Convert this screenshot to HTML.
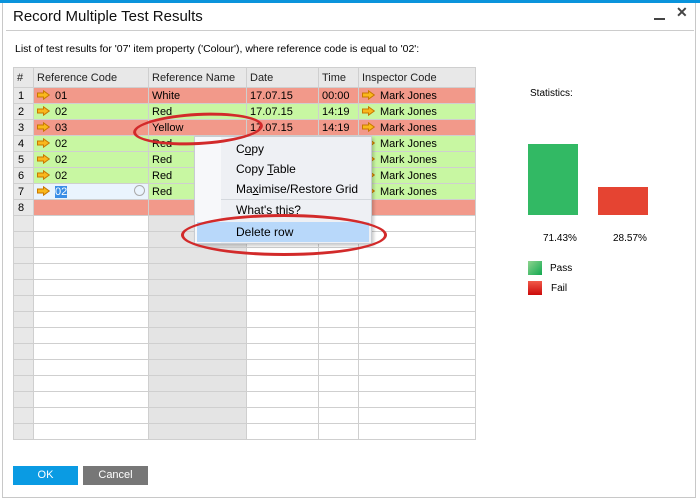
<!DOCTYPE html><html><head><style>
*{margin:0;padding:0;box-sizing:border-box}
body{width:700px;height:500px;background:#fff;font-family:"Liberation Sans",sans-serif;font-size:11px;color:#000;position:relative;overflow:hidden}
.a{position:absolute}
table{border-collapse:collapse;position:absolute;left:13px;top:67px;table-layout:fixed}
td{border:1px solid #cfcfcf;height:16px;padding:0 0 0 3px;white-space:nowrap;overflow:hidden;font-size:11px;line-height:14px}
th{background:#e8e8e8;border:1px solid #cfcfcf;height:20px;font-weight:normal;text-align:left;padding-left:3px;color:#222}
tr.r td{background:#f2998a}
tr.g td{background:#c8f7a2}
td.n{background:#e8e8e8!important;padding-left:4px}
tr.e td{background:#fff}
tr.e td.gr{background:#e4e4e4}
.ar{display:inline-block;width:13px;height:10px;margin-right:5px;vertical-align:-1px}
.mi{padding:0 0 0 42px;height:20px;line-height:20px;font-size:12px}
</style></head><body>
<svg width="0" height="0" style="position:absolute"><defs><symbol id="arr" viewBox="0 0 13 10"><path d="M0.5 3H6.5V0.8L12.3 5L6.5 9.2V7H0.5Z" fill="#f9b81c" stroke="#c97800" stroke-width="1"/></symbol></defs></svg>
<div class="a" style="left:0;top:0;width:700px;height:3px;background:#0a94dc"></div>
<div class="a" style="left:2px;top:3px;width:694px;height:495px;border:1px solid #c8c8c8;border-top:none"></div>
<div class="a" style="left:13px;top:8px;font-size:15px;color:#111">Record Multiple Test Results</div>
<div class="a" style="left:654px;top:18px;width:11px;height:2px;background:#444"></div>
<div class="a" style="left:676px;top:4px;font-size:14px;color:#444;font-weight:bold">✕</div>
<div class="a" style="left:6px;top:30px;width:688px;height:1px;background:#ccc"></div>
<div class="a" style="left:15px;top:43px;font-size:10.5px">List of test results for '07' item property ('Colour'), where reference code is equal to '02':</div>
<table>
<colgroup><col style="width:20px"><col style="width:115px"><col style="width:98px"><col style="width:72px"><col style="width:40px"><col style="width:117px"></colgroup>
<tr><th>#</th><th>Reference Code</th><th>Reference Name</th><th>Date</th><th>Time</th><th>Inspector Code</th></tr>
<tr class="r"><td class="n">1</td><td><svg class="ar"><use href="#arr"/></svg>01</td><td>White</td><td>17.07.15</td><td>00:00</td><td><svg class="ar"><use href="#arr"/></svg>Mark Jones</td></tr>
<tr class="g"><td class="n">2</td><td><svg class="ar"><use href="#arr"/></svg>02</td><td>Red</td><td>17.07.15</td><td>14:19</td><td><svg class="ar"><use href="#arr"/></svg>Mark Jones</td></tr>
<tr class="r"><td class="n">3</td><td><svg class="ar"><use href="#arr"/></svg>03</td><td>Yellow</td><td>17.07.15</td><td>14:19</td><td><svg class="ar"><use href="#arr"/></svg>Mark Jones</td></tr>
<tr class="g"><td class="n">4</td><td><svg class="ar"><use href="#arr"/></svg>02</td><td>Red</td><td>17.07.15</td><td>14:19</td><td><svg class="ar"><use href="#arr"/></svg>Mark Jones</td></tr>
<tr class="g"><td class="n">5</td><td><svg class="ar"><use href="#arr"/></svg>02</td><td>Red</td><td>17.07.15</td><td>14:19</td><td><svg class="ar"><use href="#arr"/></svg>Mark Jones</td></tr>
<tr class="g"><td class="n">6</td><td><svg class="ar"><use href="#arr"/></svg>02</td><td>Red</td><td>17.07.15</td><td>14:19</td><td><svg class="ar"><use href="#arr"/></svg>Mark Jones</td></tr>
<tr class="g"><td class="n">7</td><td style="background:#eaf4fd;position:relative"><svg class="ar"><use href="#arr"/></svg><span style="background:#3a8ee6;color:#fff">02</span><span style="position:absolute;right:3px;top:1px;width:11px;height:11px;border:1px solid #aaa;border-radius:50%"></span></td><td>Red</td><td>17.07.15</td><td>14:19</td><td><svg class="ar"><use href="#arr"/></svg>Mark Jones</td></tr>
<tr class="r"><td class="n">8</td><td></td><td></td><td></td><td></td><td></td></tr>
<tr class="e"><td class="n"></td><td></td><td class="gr"></td><td></td><td></td><td></td></tr>
<tr class="e"><td class="n"></td><td></td><td class="gr"></td><td></td><td></td><td></td></tr>
<tr class="e"><td class="n"></td><td></td><td class="gr"></td><td></td><td></td><td></td></tr>
<tr class="e"><td class="n"></td><td></td><td class="gr"></td><td></td><td></td><td></td></tr>
<tr class="e"><td class="n"></td><td></td><td class="gr"></td><td></td><td></td><td></td></tr>
<tr class="e"><td class="n"></td><td></td><td class="gr"></td><td></td><td></td><td></td></tr>
<tr class="e"><td class="n"></td><td></td><td class="gr"></td><td></td><td></td><td></td></tr>
<tr class="e"><td class="n"></td><td></td><td class="gr"></td><td></td><td></td><td></td></tr>
<tr class="e"><td class="n"></td><td></td><td class="gr"></td><td></td><td></td><td></td></tr>
<tr class="e"><td class="n"></td><td></td><td class="gr"></td><td></td><td></td><td></td></tr>
<tr class="e"><td class="n"></td><td></td><td class="gr"></td><td></td><td></td><td></td></tr>
<tr class="e"><td class="n"></td><td></td><td class="gr"></td><td></td><td></td><td></td></tr>
<tr class="e"><td class="n"></td><td></td><td class="gr"></td><td></td><td></td><td></td></tr>
<tr class="e"><td class="n"></td><td></td><td class="gr"></td><td></td><td></td><td></td></tr>
</table>
<div class="a" style="left:194px;top:136px;width:178px;height:108px;background:#eef0f4;border:1px solid #c8ccd2;box-shadow:2px 2px 3px rgba(0,0,0,.2)">
<div class="a" style="left:0;top:0;width:26px;height:106px;background:#f7f8fa"></div>
<div class="a" style="left:0;top:2px;width:176px"><div class="mi" style="padding-left:41px">C<u>o</u>py</div><div class="mi" style="padding-left:41px">Copy <u>T</u>able</div><div class="mi" style="padding-left:41px">Ma<u>x</u>imise/Restore Grid</div></div>
<div class="a" style="left:26px;top:62px;width:150px;height:1px;background:#d4d8dd"></div>
<div class="a" style="left:41px;top:63px;font-size:12px;line-height:20px">What's this?</div>
<div class="a" style="left:2px;top:85px;width:172px;height:20px;background:#b8d8fa;font-size:12px;line-height:20px;padding-left:39px">Delete row</div>
</div>
<div class="a" style="left:133px;top:113px;width:130px;height:32px;border:3px solid #d22a2a;border-radius:50%;transform:rotate(-3deg)"></div>
<div class="a" style="left:181px;top:214px;width:206px;height:42px;border:3px solid #d22a2a;border-radius:50%"></div>
<div class="a" style="left:530px;top:88px;font-size:10px">Statistics:</div>
<div class="a" style="left:528px;top:144px;width:50px;height:71px;background:#32b964"></div>
<div class="a" style="left:598px;top:187px;width:50px;height:28px;background:#e54432"></div>
<div class="a" style="left:543px;top:233px;font-size:10px">71.43%</div>
<div class="a" style="left:613px;top:233px;font-size:10px">28.57%</div>
<div class="a" style="left:528px;top:261px;width:14px;height:14px;background:linear-gradient(135deg,#8fd48f,#12a850)"></div>
<div class="a" style="left:550px;top:263px;font-size:10px">Pass</div>
<div class="a" style="left:528px;top:281px;width:14px;height:14px;background:linear-gradient(#f05a4a,#cc0a0a)"></div>
<div class="a" style="left:551px;top:283px;font-size:10px">Fail</div>
<div class="a" style="left:13px;top:466px;width:65px;height:19px;background:#0a9be3;color:#fff;text-align:center;line-height:19px">OK</div>
<div class="a" style="left:83px;top:466px;width:65px;height:19px;background:#777;color:#fff;text-align:center;line-height:19px">Cancel</div>
</body></html>
